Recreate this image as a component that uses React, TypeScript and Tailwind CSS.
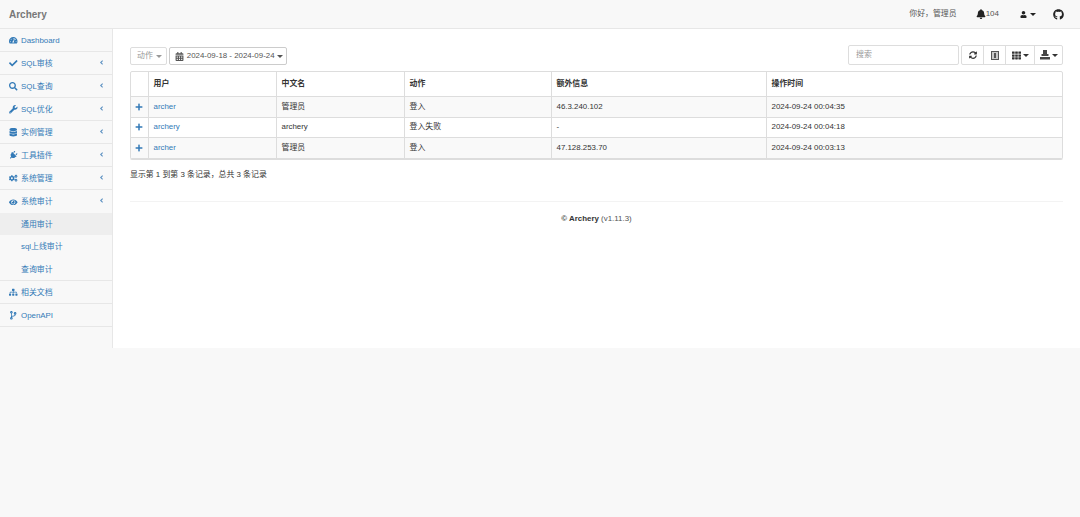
import { FaAngleLeft, FaBell, FaCalendarAlt, FaCheck, FaCodeBranch, FaCogs, FaDatabase, FaEye, FaGithub, FaPlug, FaPlus, FaSearch, FaSitemap, FaTachometerAlt, FaTh, FaUser, FaWrench, FaSyncAlt } from "react-icons/fa";
import type { ReactNode } from "react";

const Caret = ({ className = "" }: { className?: string }) => (
  <span className={`inline-block w-0 h-0 border-x-[3px] border-x-transparent border-t-[3px] border-t-current ${className}`} />
);

// glyphicon-list-alt style toggle icon
const ToggleIcon = () => (
  <svg width="8" height="9" viewBox="0 0 8 9" className="text-[#555]">
    <rect x="0" y="0" width="8" height="9" fill="currentColor" />
    <rect x="1" y="1" width="6" height="7" fill="#c9c9c9" />
    <rect x="3" y="2" width="2" height="5" fill="currentColor" />
  </svg>
);

// glyphicon-export style icon
const ExportIcon = () => (
  <svg width="10" height="10" viewBox="0 0 10 10" className="text-[#444]">
    <path d="M3 0h4v4h1.5v2h-7V4H3z" fill="currentColor" />
    <path d="M0 7h10v2.5H0z" fill="currentColor" />
  </svg>
);

const menu: { icon: ReactNode; label: string; arrow?: boolean }[] = [
  { icon: <FaTachometerAlt />, label: "Dashboard" },
  { icon: <FaCheck />, label: "SQL审核", arrow: true },
  { icon: <FaSearch />, label: "SQL查询", arrow: true },
  { icon: <FaWrench />, label: "SQL优化", arrow: true },
  { icon: <FaDatabase />, label: "实例管理", arrow: true },
  { icon: <FaPlug className="rotate-45" />, label: "工具插件", arrow: true },
  { icon: <FaCogs />, label: "系统管理", arrow: true },
];

const rows = [
  { user: "archer", name: "管理员", action: "登入", extra: "46.3.240.102", time: "2024-09-24 00:04:35", shade: true, h: "h-[21px]" },
  { user: "archery", name: "archery", action: "登入失败", extra: "-", time: "2024-09-24 00:04:18", shade: false, h: "h-[20px]" },
  { user: "archer", name: "管理员", action: "登入", extra: "47.128.253.70", time: "2024-09-24 00:03:13", shade: true, h: "h-[21px]" },
];

const MenuRow = ({ icon, label, arrow }: { icon: ReactNode; label: string; arrow?: boolean }) => (
  <div className="h-[23px] flex items-center pt-[1px] pl-[9px] pr-[7px] border-b border-[#e7e7e7] text-[#337ab7]">
    <span className="w-[12px] flex text-[8.5px]">{icon}</span>
    <span>{label}</span>
    {arrow && <FaAngleLeft className="ml-auto text-[7px] text-[#5a8fc0] mb-[3px]" />}
  </div>
);

export default function App() {
  return (
    <div className="min-h-[517px] bg-[#f8f8f8] text-[7.9px] text-[#333] font-['Liberation_Sans','Noto_Sans_CJK_SC',sans-serif]">
      {/* Navbar */}
      <div className="h-[29px] flex items-center border-b border-[#e7e7e7] pl-[9px] pr-[16px]">
        <span className="text-[10px] font-bold text-[#777]">Archery</span>
        <div className="ml-auto flex items-center text-[#555]">
          <span>你好，管理员</span>
          <span className="ml-[19px] flex items-center">
            <FaBell className="text-[10px] text-[#222]" />
            <span className="text-[8px]">104</span>
          </span>
          <span className="ml-[21px] flex items-center text-[#222]">
            <FaUser className="text-[7px]" />
            <Caret className="ml-[3px]" />
          </span>
          <FaGithub className="ml-[17px] text-[11px] text-[#222]" />
        </div>
      </div>

      <div className="flex h-[319px]">
        {/* Sidebar */}
        <div className="w-[113px] shrink-0 border-r border-[#e7e7e7]">
          {menu.map((m) => (
            <MenuRow key={m.label} {...m} />
          ))}
          <div className="border-b border-[#e7e7e7]">
            <div className="h-[23px] flex items-center pt-[1px] pl-[9px] pr-[7px] text-[#337ab7]">
              <span className="w-[12px] flex text-[8.5px]"><FaEye /></span>
              <span>系统审计</span>
              <FaAngleLeft className="ml-auto text-[7px] text-[#5a8fc0] mb-[3px]" />
            </div>
            <div className="h-[22px] flex items-center pt-[1px] pl-[21px] bg-[#eeeeee] text-[#337ab7]">通用审计</div>
            <div className="h-[23px] flex items-center pt-[1px] pl-[21px] text-[#337ab7]">sql上线审计</div>
            <div className="h-[22px] flex items-center pt-[1px] pl-[21px] text-[#337ab7]">查询审计</div>
          </div>
          <MenuRow icon={<FaSitemap />} label="相关文档" />
          <MenuRow icon={<FaCodeBranch />} label="OpenAPI" />
        </div>

        {/* Main */}
        <div className="flex-1 bg-white px-[17px] pt-[16px]">
          <div className="flex items-end h-[20px]">
            <div className="h-[18px] pl-[6px] pr-[4px] flex items-center border border-[#ddd] rounded-[2px] text-[#999]">
              动作
              <Caret className="ml-[3px]" />
            </div>
            <div className="ml-[2px] h-[18px] pl-[5px] pr-[3px] flex items-center border border-[#ccc] rounded-[2px] text-[#555]">
              <FaCalendarAlt className="text-[9px] mr-[3px]" />
              2024-09-18 - 2024-09-24
              <Caret className="ml-[2px]" />
            </div>
            <div className="ml-auto h-[20px] w-[111px] px-[7px] flex items-center border border-[#ddd] rounded-[2px] text-[#999]">搜索</div>
            <div className="ml-[2px] h-[20px] flex border border-[#ddd] rounded-[2px] text-[#333]">
              <div className="w-[22px] flex items-center justify-center border-r border-[#ddd]"><FaSyncAlt className="text-[8px]" /></div>
              <div className="w-[22px] flex items-center justify-center border-r border-[#ddd]"><ToggleIcon /></div>
              <div className="w-[29px] flex items-center justify-center border-r border-[#ddd]"><FaTh className="text-[9px]" /><Caret className="ml-[2px]" /></div>
              <div className="w-[27px] flex items-center justify-center"><ExportIcon /><Caret className="ml-[2px]" /></div>
            </div>
          </div>

          <div className="mt-[6px] border border-[#ddd] rounded-[2px] shadow-[0_1px_0_#ddd]">
            <table className="w-full table-fixed border-collapse">
              <colgroup>
                <col className="w-[17px]" />
                <col className="w-[128px]" />
                <col className="w-[128px]" />
                <col className="w-[147px]" />
                <col className="w-[215px]" />
                <col />
              </colgroup>
              <thead>
                <tr className="h-[24px] font-bold text-left border-b border-[#ddd]">
                  <th className="border-r border-[#ddd]" />
                  <th className="border-r border-[#ddd] pl-[5px]">用户</th>
                  <th className="border-r border-[#ddd] pl-[5px]">中文名</th>
                  <th className="border-r border-[#ddd] pl-[5px]">动作</th>
                  <th className="border-r border-[#ddd] pl-[5px]">额外信息</th>
                  <th className="pl-[5px]">操作时间</th>
                </tr>
              </thead>
              <tbody>
                {rows.map((r, i) => (
                  <tr key={i} className={`${r.h} border-b border-[#ddd] last:border-b-0 ${r.shade ? "bg-[#f9f9f9]" : "bg-white"}`}>
                    <td className="border-r border-[#ddd] text-[#337ab7]"><FaPlus className="mx-auto text-[8px]" /></td>
                    <td className="border-r border-[#ddd] pl-[5px] text-[#337ab7]">{r.user}</td>
                    <td className="border-r border-[#ddd] pl-[5px]">{r.name}</td>
                    <td className="border-r border-[#ddd] pl-[5px]">{r.action}</td>
                    <td className="border-r border-[#ddd] pl-[5px]">{r.extra}</td>
                    <td className="pl-[5px]">{r.time}</td>
                  </tr>
                ))}
              </tbody>
            </table>
          </div>

          <div className="mt-[10px] leading-[12px]">显示第 1 到第 3 条记录，总共 3 条记录</div>

          <div className="mt-[20px] border-t border-[#f3f3f3] pt-[11px] text-center">
            <b>© Archery</b> <span className="text-[#555]">(v1.11.3)</span>
          </div>
        </div>
      </div>
    </div>
  );
}
